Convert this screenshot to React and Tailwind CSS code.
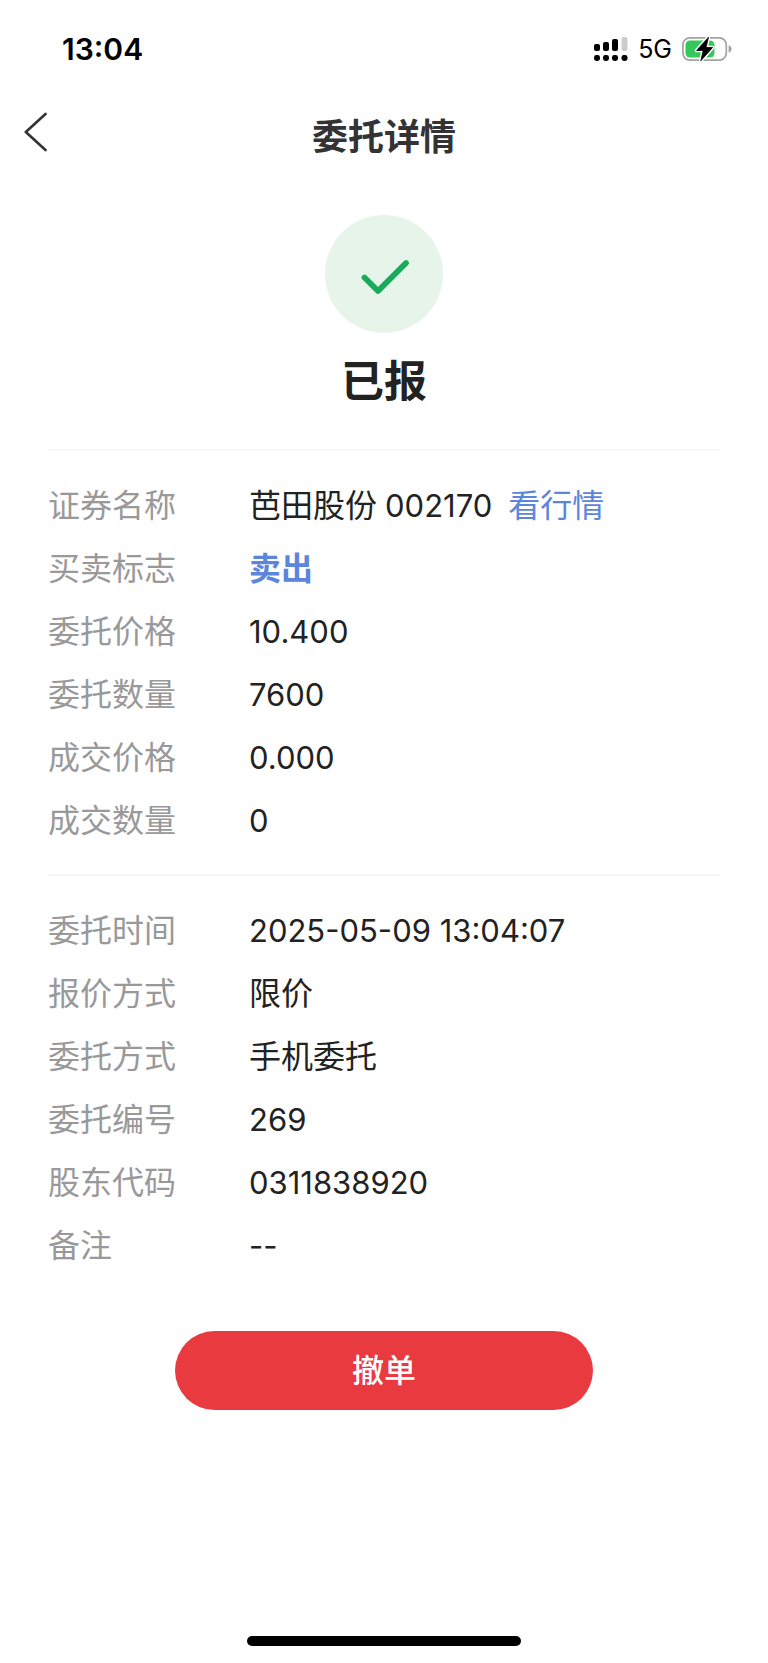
const orderRows = [
  { label: "证券名称", value: "芭田股份", number: "002170", link: "看行情" },
  { label: "买卖标志", value: "卖出", accent: true },
  { label: "委托价格", number: "10.400" },
  { label: "委托数量", number: "7600" },
  { label: "成交价格", number: "0.000" },
  { label: "成交数量", number: "0" },
];

const entrustRows = [
  { label: "委托时间", number: "2025-05-09 13:04:07" },
  { label: "报价方式", value: "限价" },
  { label: "委托方式", value: "手机委托" },
  { label: "委托编号", number: "269" },
  { label: "股东代码", number: "0311838920" },
  { label: "备注", number: "--" },
];

function SignalIcon() {
  return (
    <svg className="w-[34px] h-6" viewBox="0 0 34 24" aria-hidden="true">
      <rect x="0" y="7" width="6" height="7" rx="2" />
      <rect x="9" y="5" width="6" height="9" rx="2" />
      <rect x="18" y="2" width="6" height="12" rx="2" />
      <rect x="27.5" y="0" width="6" height="14" rx="2" fill="#cccccc" />
      <rect x="0" y="18" width="6" height="6" rx="2.4" />
      <rect x="9" y="18" width="6" height="6" rx="2.4" />
      <rect x="18" y="18" width="6" height="6" rx="2.4" />
      <rect x="27.5" y="18" width="6" height="6" rx="2.4" />
    </svg>
  );
}

function BatteryIcon() {
  return (
    <svg className="w-[50px] h-[26px]" viewBox="0 0 50 26" aria-hidden="true">
      <rect
        x="0.9"
        y="1.9"
        width="43.4"
        height="22.2"
        rx="7"
        fill="none"
        stroke="#a3a3a3"
        strokeWidth="1.7"
      />
      <path d="M46.6 9.3c2 .6 3 2 3 3.7s-1 3.1-3 3.7z" fill="#a3a3a3" />
      <rect x="3.5" y="4.5" width="29" height="17" rx="4.5" fill="#34c759" />
      <path
        d="M26.5 1.2 14.6 14.5h6.6L18.8 24.8 30.6 11.5H24z"
        stroke="#ffffff"
        strokeWidth="3.6"
        strokeLinejoin="round"
      />
      <path
        d="M26.5 1.2 14.6 14.5h6.6L18.8 24.8 30.6 11.5H24z"
        stroke="#000000"
        strokeWidth="0.8"
        strokeLinejoin="round"
      />
    </svg>
  );
}

function StatusBar() {
  return (
    <div className="flex items-center justify-between h-[98px] pl-[62px] pr-9 text-black">
      <span className="text-[30px] leading-9 font-semibold">13:04</span>
      <div className="flex items-center">
        <SignalIcon />
        <span className="mx-[10px] text-[25px] leading-8">5G</span>
        <BatteryIcon />
      </div>
    </div>
  );
}

function DetailRow({ label, value, number, link, accent }) {
  return (
    <div className="flex items-center h-[63px]">
      <dt className="w-[201px] shrink-0 text-[#999999]">{label}</dt>
      <dd
        className={
          accent
            ? "flex items-baseline font-bold text-[#5b86dc]"
            : "flex items-baseline text-[#222222]"
        }
      >
        {value && <span className="mr-2">{value}</span>}
        {number && <span className="text-[31px]">{number}</span>}
        {link && (
          <a href="#quote" className="ml-4 text-[#5b86dc]">
            {link}
          </a>
        )}
      </dd>
    </div>
  );
}

function DetailList({ rows }) {
  return (
    <dl className="border-t-2 border-[#f6f6f6] pt-[23px] pb-[22px] text-[32px] leading-10">
      {rows.map((row) => (
        <DetailRow key={row.label} {...row} />
      ))}
    </dl>
  );
}

export default function App() {
  return (
    <div className="flex flex-col min-h-screen bg-white font-[Inter,'Noto_Sans_CJK_SC',sans-serif]">
      <StatusBar />

      <header className="grid grid-cols-[1fr_auto_1fr] items-center h-[78px] px-6">
        <button type="button" aria-label="返回" className="justify-self-start pb-[10px]">
          <svg className="w-6 h-10" viewBox="0 0 24 40" fill="none" aria-hidden="true">
            <path
              d="M21.5 2 1.8 20 21.5 38"
              stroke="#333333"
              strokeWidth="2.6"
              strokeLinecap="round"
              strokeLinejoin="round"
            />
          </svg>
        </button>
        <h1 className="text-[36px] leading-[48px] font-semibold text-[#333333]">委托详情</h1>
      </header>

      <main className="flex flex-col px-12 pt-[39px]">
        <div className="flex flex-col items-center pb-10">
          <div className="flex items-center justify-center w-[118px] h-[118px] rounded-full bg-[#e7f4ea]">
            <svg className="w-[52px] h-10" viewBox="0 0 52 40" fill="none" aria-hidden="true">
              <path
                d="M6.5 23.5 20 37 48 9"
                stroke="#1aaa5c"
                strokeWidth="5.8"
                strokeLinecap="round"
                strokeLinejoin="round"
              />
            </svg>
          </div>
          <h2 className="mt-5 text-[43px] leading-[56px] font-bold text-[#222222]">已报</h2>
        </div>

        <DetailList rows={orderRows} />
        <DetailList rows={entrustRows} />

        <button
          type="button"
          className="self-center mt-8 w-[418px] max-w-full h-[79px] rounded-full bg-[#e93a40] text-[32px] leading-10 font-medium text-white"
        >
          撤单
        </button>
      </main>

      <footer className="flex justify-center mt-auto pb-[17px]">
        <div className="w-[274px] h-[10px] rounded-full bg-black" />
      </footer>
    </div>
  );
}
